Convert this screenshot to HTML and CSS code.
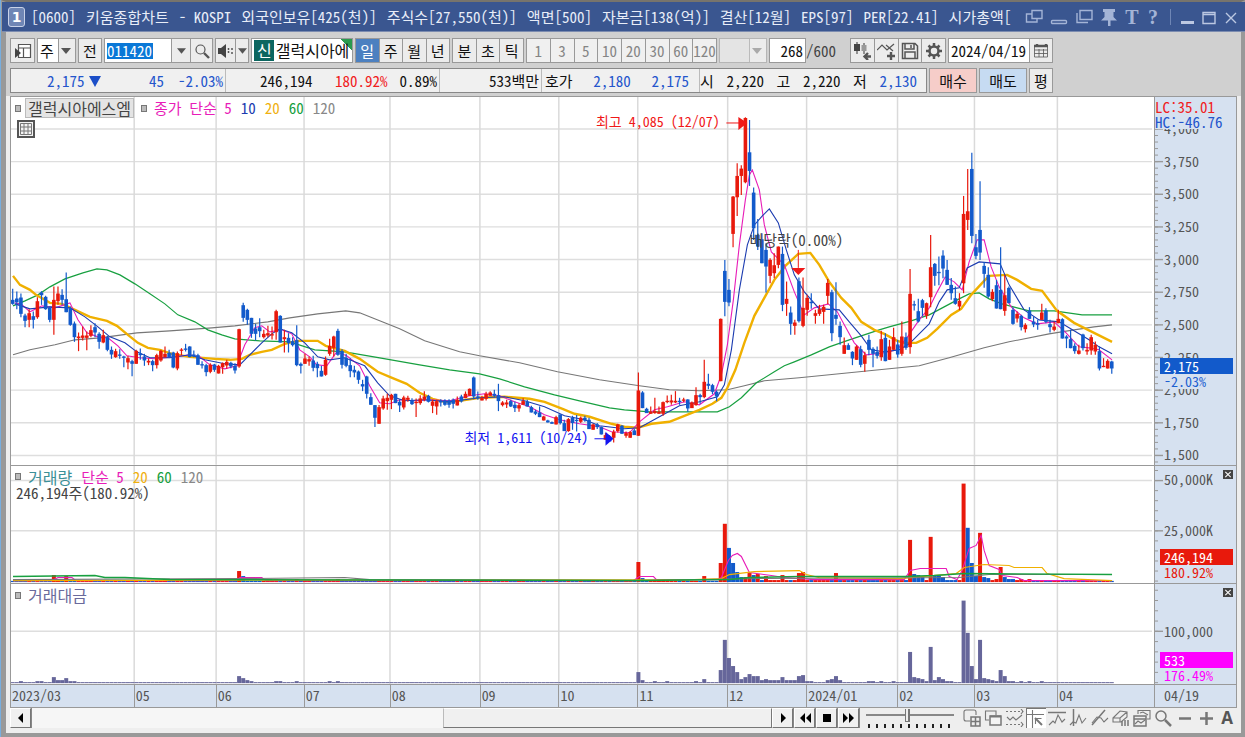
FILE: index.html
```html
<!DOCTYPE html>
<html lang="ko">
<head>
<meta charset="utf-8">
<title>[0600] 키움종합차트</title>
<link rel="stylesheet" href="styles.css">
</head>
<body>
<main class="window">
  <header class="titlebar">
    <span class="badge">1</span>
    <h1 class="title"><span>[0600]</span><span>키움종합차트</span><span>- KOSPI</span><span>외국인보유[425(천)]</span><span>주식수[27,550(천)]</span><span>액면[500]</span><span>자본금[138(억)]</span><span>결산[12월]</span><span>EPS[97]</span><span>PER[22.41]</span><span>시가총액[</span></h1>
    <div class="wintools">
      <button aria-label="창 분리"><svg viewBox="0 0 18 18"><path d="M7 2.500h10v8H7zM7 6H1.500v8H12v-3"/></svg></button>
      <button aria-label="접기"><svg viewBox="0 0 18 18"><rect x="1.500" y="12.500" width="15" height="3" rx="1"/></svg></button>
      <button aria-label="복제"><svg viewBox="0 0 18 18"><path d="M5 2.500h12v9H5zM2 5v9.500h11"/></svg></button>
      <button aria-label="고정"><svg viewBox="0 0 18 18"><path class="solid" d="M3 1h12v3h-1.500v5l3.500 3.500H1L4.500 9V4H3zM8 12h2.500v6H8z"/></svg></button>
      <button class="glyph">T</button>
      <button class="glyph" aria-label="도움말">?</button>
      <span class="split"></span>
      <button class="lit" aria-label="최소화"><svg viewBox="0 0 18 18"><path class="thick" d="M3 14.500h13"/></svg></button>
      <button class="lit" aria-label="최대화"><svg viewBox="0 0 18 18"><path d="M3 4.500h12v11H3zM3 6.500h12"/></svg></button>
      <button class="lit" aria-label="닫기"><svg viewBox="0 0 18 18"><path d="M4 5l10 10M14 5L4 15"/></svg></button>
    </div>
  </header>

  <div class="toolbar">
    <button class="btn" aria-label="패널"><svg class="ic" viewBox="0 0 18 18"><path d="M4.500 2.500h12v13h-12zM4.500 6h12M9.500 6v10" fill="#fff"/><path class="solid" d="M1 6l6 5-6 5z"/></svg></button>
    <span class="combo group"><select aria-label="종목 구분"><option>주</option></select><svg class="caret" viewBox="0 0 10 6"><path d="M0 0h10L5 6z"/></svg></span>
    <button class="btn mid">전</button>
    <span class="group">
      <input class="code" aria-label="종목코드" value="011420">
      <button class="seg" aria-label="최근 종목"><svg class="tri" viewBox="0 0 10 6"><path d="M0 0h10L5 6z"/></svg></button>
      <button class="seg find" aria-label="검색"><svg class="ic" viewBox="0 0 18 18"><circle cx="7.500" cy="7.500" r="4.500"/><path class="thick" d="M11 11l5 5"/></svg></button>
    </span>
    <span class="group">
      <button class="seg" aria-label="음성"><svg class="ic" viewBox="0 0 18 18"><path class="solid" d="M1 6h3l5-4v14l-5-4H1z"/><path d="M11.500 6v6M14 7h3M14 11h3" stroke-dasharray="2 1" stroke-width="1.500"/></svg></button>
      <button class="seg slim" aria-label="음성 설정"><svg class="tri" viewBox="0 0 10 6"><path d="M0 0h10L5 6z"/></svg></button>
    </span>
    <span class="group namebox"><b>신</b><span>갤럭시아에</span></span>
    <span class="group periods four"><button class="on">일</button><button>주</button><button>월</button><button>년</button></span>
    <span class="group periods three"><button>분</button><button>초</button><button>틱</button></span>
    <span class="group periods minutes"><button>1</button><button>3</button><button>5</button><button>10</button><button>20</button><button>30</button><button>60</button><button>120</button></span>
    <span class="combo group faded"><select aria-label="주기" disabled><option></option></select><svg class="caret" viewBox="0 0 10 6"><path d="M0 0h10L5 6z"/></svg></span>
    <label class="count"><input class="num" value="268" aria-label="봉 개수">/600</label>
    <span class="group icons">
      <button aria-label="봉 차트 추가"><svg class="ic" viewBox="0 0 18 18"><path d="M4 0v12M11 1v11"/><path class="solid" d="M1 2h6v7H1z"/><path fill="#999" stroke="none" d="M8.500 3h5v6h-5z"/><path class="thick" d="M12 14.500h6M15 11l-3.500 3.500L15 18"/></svg></button>
      <button aria-label="지표 추가"><svg class="ic" viewBox="0 0 18 18"><path d="M0 8l5-5 5 5 7-6M9 3l7 6"/><path class="thick" d="M10 14h8M14 10v8"/></svg></button>
      <button aria-label="저장"><svg class="ic" viewBox="0 0 18 18"><path d="M1.500 1.500H14L16.500 4v12.500h-15zM4 2v5h9V2M4 16v-6h10v6M10 3v3" stroke-width="1.500"/></svg></button>
      <button aria-label="설정"><svg class="ic" viewBox="0 0 18 18"><circle cx="9" cy="9" r="4.500" stroke-width="2.500"/><path d="M9 1v3M9 14v3M1 9h3M14 9h3M3.500 3.500l2 2M12.500 12.500l2 2M14.500 3.500l-2 2M5.500 12.500l-2 2" stroke-width="2.500"/></svg></button>
    </span>
    <span class="group"><input class="date" aria-label="기준일" value="2024/04/19"><button class="seg cal" aria-label="달력"><svg class="ic" viewBox="0 0 18 18"><path d="M2.500 4h13v11h-13zM2.500 8h13M2.500 11.500h13M7 7v8M11.500 7v8" stroke-width=".8"/><path class="thick" d="M2 4h14M5 2v2M14 2v2"/></svg></button></span>
  </div>

  <div class="quotes">
    <div class="quotebar">
      <div class="cell c1"><span class="down lead">2,175<svg class="fall" viewBox="0 0 12 11"><path d="M0 0h12L6 11z"/></svg></span><span class="down">45</span><span class="down">-2.03%</span></div>
      <div class="cell c2"><span class="lead">246,194</span><span class="up">180.92%</span><span>0.89%</span></div>
      <div class="cell c3"><span>533백만</span></div>
      <div class="cell c4"><span>호가</span><span class="down">2,180</span><span class="down">2,175</span></div>
      <div class="cell c5"><span>시</span><span>2,220</span><span>고</span><span>2,220</span><span>저</span><span class="down">2,130</span></div>
    </div>
    <button class="btn buy">매수</button>
    <button class="btn sell">매도</button>
    <button class="btn mid">평</button>
  </div>

  <section class="charts">
    <div class="panel price">
      <div class="plot">
        <svg id="price" viewBox="11 97 1144 368" preserveAspectRatio="none"></svg>
        <div class="legend">
          <i class="dot"></i><button class="name">갤럭시아에스엠</button><i class="dot"></i>
          <span class="m5 main">종가 단순 5</span><span class="m10">10</span><span class="m20">20</span><span class="m60">60</span><span class="m120">120</span>
        </div>
        <button class="gridbtn" aria-label="데이터 표"><svg viewBox="0 0 14 14"><path d="M1.500 1.500h11v11h-11zM1.500 5h11M1.500 9h11M5 2v10M9 2v10"/></svg></button>
        <span class="note high">최고 4,085 (12/07)</span>
        <span class="note low">최저 1,611 (10/24)</span>
        <span class="note ex">배당락(0.00%)</span>
      </div>
      <div class="axis" data-panel="price">
        <div class="extremes"><span class="up">LC:35.01</span><span class="down">HC:-46.76</span></div>
        <div class="mark now"><b>2,175</b><span>-2.03%</span></div>
      </div>
    </div>
    <div class="panel volume">
      <div class="plot">
        <svg id="volume" viewBox="11 466 1144 117" preserveAspectRatio="none"></svg>
        <div class="legend">
          <i class="dot"></i><span class="vol">거래량</span><span class="m5">단순 5</span><span class="m20">20</span><span class="m60">60</span><span class="m120">120</span>
        </div>
        <div class="sub">246,194주(180.92%)</div>
      </div>
      <div class="axis" data-panel="volume">
        <button class="close" aria-label="거래량 닫기"><svg viewBox="0 0 10 10"><path d="M2 2l6 6M8 2L2 8"/></svg></button>
        <div class="mark vnow"><b>246,194</b><span>180.92%</span></div>
      </div>
    </div>
    <div class="panel amount">
      <div class="plot">
        <svg id="amount" viewBox="11 584 1144 99" preserveAspectRatio="none"></svg>
        <div class="legend"><i class="dot"></i><span class="amt">거래대금</span></div>
      </div>
      <div class="axis" data-panel="amount">
        <button class="close" aria-label="거래대금 닫기"><svg viewBox="0 0 10 10"><path d="M2 2l6 6M8 2L2 8"/></svg></button>
        <div class="mark anow"><b>533</b><span>176.49%</span></div>
      </div>
    </div>
    <div class="timeline"><div id="months" class="months"></div><div class="today">04/19</div></div>
  </section>

  <footer class="bottom">
    <button class="scroll" aria-label="왼쪽"><svg viewBox="0 0 16 16"><path d="M10 3v10L5 8z"/></svg></button>
    <div class="track"><div class="thumb"></div></div>
    <button class="scroll" aria-label="오른쪽"><svg viewBox="0 0 16 16"><path d="M6 3v10l5-5z"/></svg></button>
    <button class="scroll" aria-label="뒤로"><svg viewBox="0 0 16 16"><path d="M8 3v10L3 8zM14 3v10L9 8z"/></svg></button>
    <button class="scroll" aria-label="정지"><svg viewBox="0 0 16 16"><path d="M4 4h8v8H4z"/></svg></button>
    <button class="scroll" aria-label="앞으로"><svg viewBox="0 0 16 16"><path d="M2 3v10l5-5zM8 3v10l5-5z"/></svg></button>
    <div class="speed"><input type="range" min="0" max="100" value="47" aria-label="속도"><div class="ticks"></div></div>
    <div class="tools">
      <button aria-label="추가"><svg viewBox="0 0 18 18"><path d="M7 12H3a2 2 0 0 1-2-2V3a2 2 0 0 1 2-2h8a2 2 0 0 1 2 2v3"/><path d="M8 8h9v9H8zM12.500 8v9M8 12.500h9" stroke-width="1.500"/></svg></button>
      <button aria-label="창 겹치기"><svg viewBox="0 0 18 18"><path d="M5 11H1.500v-9H12V6"/><path d="M6 7h11v9H6z" fill="#f4f4f4" stroke-width="1.500"/><path class="thick" d="M6 7.500h11"/></svg></button>
      <button aria-label="기간"><svg viewBox="0 0 18 18"><path d="M0 2.500h17M0 15.500h17" stroke-dasharray="2 2"/><path d="M1 8l3 3 3-3 3 3 6-5M15 0l2 2.500-2 2.500M15 13l2 2.500-2 2.500"/></svg></button>
      <button class="on" aria-label="십자선"><svg viewBox="0 0 18 18"><path d="M0 4.500h17M5.500 0v18"/><path class="thick" d="M8 8l7 7"/><path d="M8.500 14V8.500h6"/></svg></button>
      <button aria-label="수평선"><svg viewBox="0 0 18 18"><path d="M0 3.500h18" stroke-width="1.500"/><path d="M1 16l4-4 2 2 3-8 4 7 3-3"/></svg></button>
      <button aria-label="수직선"><svg viewBox="0 0 18 18"><path d="M4.500 0v17" stroke-width="1.500"/><path d="M1 16l3-3 3 1 3-8 3 8 4-5"/></svg></button>
      <button aria-label="추세선"><svg viewBox="0 0 18 18"><path d="M1 16L14 1" stroke-width="1.500"/><path d="M1 14l5-6 4 1 3 4 4-4"/></svg></button>
      <button aria-label="지우기"><svg viewBox="0 0 18 18"><path d="M1 9l7-7 7 1v5l-6 5H1zM1 9h7l7-6M8 9v4"/><path d="M10 12v5M13 11v6M16 11v6" stroke-width="1.500"/></svg></button>
      <button aria-label="차트 복사"><svg viewBox="0 0 18 18"><path d="M5 5V1.500h12V10h-3"/><path d="M1 7h12v10H1zM1 10h12" stroke-width="1.500"/><path d="M2 15l3-3 3 2 4-3M7 4l3-1 5 3"/></svg></button>
      <button aria-label="확대경"><svg viewBox="0 0 18 18"><circle cx="7" cy="7" r="5" stroke-width="1.500"/><path d="M11 11l6 6" stroke-width="2.500"/></svg></button>
      <button aria-label="축소"><svg viewBox="0 0 18 18"><path d="M3 9.500h12" stroke-width="2.500"/></svg></button>
      <button aria-label="확대"><svg viewBox="0 0 18 18"><path d="M3 9.500h13M9.500 3v13" stroke-width="2.500"/></svg></button>
      <button class="letter">A</button>
    </div>
  </footer>
</main>
<script src="chart.js"></script>
</body>
</html>
```
FILE: styles.css
```css
* { box-sizing: border-box; }
body {
  margin: 0;
  font: 15px/20px "Noto Sans Mono CJK KR", "Liberation Sans", "Noto Sans CJK KR", sans-serif;
  color: #111;
  background: #78aede;
}
button, input, select { font: inherit; color: inherit; margin: 0; padding: 0; border: 0; border-radius: 0; background: none; }
svg { display: block; }

.window {
  display: flex;
  flex-direction: column;
  height: 100vh;
  margin-left: 1px;
  background: #d0d0d0;
  border: solid #999;
  border-width: 2px 4px 4px 5px;
  border-top-color: #77746c;
}

/* title bar */
.titlebar {
  display: flex;
  align-items: center;
  gap: 6px;
  height: 30px;
  margin: 0 -4px;
  padding: 0 4px 0 6px;
  background: #3a5690;
  border-bottom: 1px solid #7c8cb0;
  color: #e8edf8;
  flex: none;
}
.badge {
  width: 17px;
  height: 20px;
  border: 1px solid #c8d2e8;
  border-radius: 3px;
  background: #6f86b5;
  color: #fff;
  text-align: center;
  font: bold 14px/18px "DejaVu Sans", sans-serif;
  flex: none;
}
.title { display: flex; gap: 10px; flex: 1 1 0; min-width: 0; margin: 0; font-size: 15px; font-weight: normal; line-height: 24px; white-space: nowrap; overflow: hidden; }
.wintools { display: flex; align-items: center; gap: 5px; flex: none; }
.wintools button { width: 20px; height: 20px; color: #a4b4d6; }
.wintools svg { width: 18px; height: 18px; margin: auto; fill: none; stroke: #a4b4d6; stroke-width: 1.4; }
.wintools .solid { fill: #a4b4d6; stroke: none; }
.wintools .thick { stroke-width: 3; }
.wintools .lit { margin-left: -3px; }
.wintools .lit svg { stroke: #bcc8e2; }
.wintools .glyph { width: 16px; font: bold 20px/20px "Liberation Serif", serif; }
.split { width: 1px; height: 16px; margin: 0 4px; background: #6f86b5; }

/* toolbar */
.toolbar { display: flex; align-items: center; gap: 2px; height: 36px; padding: 6px 4px 5px; flex: none; }
.btn, .group { height: 25px; border: 1px solid #999; background: #ececec; flex: none; }
.group { display: flex; align-items: stretch; }
.btn { width: 25px; }
.btn.mid { width: 24px; }
.ic { width: 18px; height: 18px; margin: auto; fill: none; stroke: #555; stroke-width: 1.2; }
.ic .solid { fill: #444; stroke: none; }
.ic .thick { stroke-width: 2.4; }
.combo { position: relative; width: 39px; background: linear-gradient(90deg, #fff 20px, #999 20px, #999 21px, #ececec 21px); }
.combo select { width: 100%; appearance: none; padding-left: 2px; }
.combo .caret { position: absolute; right: 4px; top: 9px; width: 10px; height: 6px; fill: #555; pointer-events: none; }
.faded { width: 48px; background: linear-gradient(90deg, #e4e4e4 29px, #bbb 29px, #bbb 30px, #ececec 30px); border-color: #b5b5b5; }
.faded .caret { fill: #aaa; }
.code { width: 66px; padding-left: 2px; color: #fff; background: linear-gradient(#0a78d7, #0a78d7) 2px 4px / 46px 16px no-repeat #fff; }
.seg { width: 19px; border-left: 1px solid #999; }
.group > .seg:first-child { border-left: 0; }
.find { width: 22px; }
.slim { width: 13px; }
.tri { width: 9px; height: 6px; margin: auto; fill: #555; }
.namebox { width: 102px; background: linear-gradient(225deg, #2a9a4e 8px, transparent 8px), #fff; padding: 1px 0 1px 2px; overflow: hidden; white-space: nowrap; font-size: 16px; }
.namebox b { background: #0c6660; color: #fff; font-weight: normal; padding: 0 2px 0 3px; margin-right: 2px; }
.periods button { flex: 1 1 0; border-left: 1px solid #999; }
.periods button:first-child { border-left: 0; }
.four { width: 95px; }
.three { width: 72px; }
.minutes { width: 191px; color: #858585; background: #f0f0f0; }
.periods .on { background: #4c80c0; color: #fff; }
.count { display: flex; align-items: center; width: 79px; color: #444; flex: none; }
.num { width: 37px; height: 25px; border: 1px solid #999; background: #fff; text-align: right; padding-right: 2px; color: #111; }
.icons { width: 96px; }
.icons button { flex: 1 1 0; border-left: 1px solid #999; }
.icons button:first-child { border-left: 0; }
.date { width: 80px; padding-left: 2px; background: #fff; }
.cal { width: 23px; }

/* quote strip */
.quotes { display: flex; gap: 2px; height: 25px; padding: 0 4px; flex: none; }
.quotebar { display: flex; width: 917px; background: #f0f0f0; border: 1px solid #888; line-height: 23px; flex: none; }
.cell { display: flex; justify-content: space-between; border-left: 1px solid #bbb; white-space: nowrap; }
.cell:first-child { border-left: 0; }
.lead { margin-right: auto; }
.c1 { width: 214px; padding: 0 2px 0 36px; gap: 14px; }
.c2 { width: 214px; padding: 0 2px 0 34px; gap: 12px; }
.c3 { width: 102px; padding: 0 2px; justify-content: flex-end; }
.c4 { width: 158px; padding: 0 10px 0 3px; }
.c5 { flex: 1; padding: 0 9px 0 0; }
.fall { display: inline-block; width: 12px; height: 11px; margin-left: 4px; fill: #1c4fc8; }
.down { color: #2455cc; }
.up { color: #f0201c; }
.buy, .sell { width: 48px; }
.buy { background: #f6cdc9; }
.sell { background: #c6dbf2; }

/* charts */
.charts { display: flex; flex-direction: column; flex: 1; min-height: 0; margin-top: 3px; padding: 0 4px; background: #eee; }
.panel { display: grid; grid-template-columns: minmax(0, 1fr) 82px; min-height: 0; background: #fff; border: solid #999; border-width: 1px 1px 0; }
.price { flex: 369 1 0; }
.volume { flex: 118 1 0; }
.amount { flex: 100 1 0; }
.plot { position: relative; min-height: 0; overflow: hidden; }
.plot > svg { position: absolute; width: 100%; height: 100%; }
.axis { position: relative; background: #d6e1f0; border-left: 1px solid #999; overflow: hidden; color: #555; font-size: 14px; }
.axis > svg { position: absolute; left: 0; top: 0; width: 8px; height: 100%; }
.lab { position: absolute; left: 9px; line-height: 16px; margin-top: -9px; }
.legend { position: absolute; left: 4px; top: 0; display: flex; align-items: center; gap: 9px; white-space: nowrap; line-height: 22px; }
.legend .dot { width: 6px; height: 7px; border: 1px solid #777; background: #bbb; margin-right: -2px; }
.legend .dot + .name { margin-left: -3px; margin-right: -2px; }
.name { height: 20px; padding: 0 2px; background: #e4e4e4; border: 1px solid #bbb; color: #444; line-height: 18px; }
.name, .vol, .amt { font-size: 16px; }
.m5 { color: #e81cb8; }
.m10 { color: #1c3cb0; }
.m20 { color: #f0b010; }
.m60 { color: #18a040; }
.m120 { color: #888; }
.vol { color: #3c9098; }
.amt { color: #6a6a9c; }
.sub { position: absolute; left: 5px; top: 17px; color: #444; }
.gridbtn { position: absolute; left: 6px; top: 23px; width: 18px; height: 18px; border: 2px solid #555; background: #f4f4f4; }
.gridbtn svg { width: 14px; height: 14px; fill: none; stroke: #777; }
.note { position: absolute; font-size: 14px; line-height: 18px; white-space: nowrap; }
.high { color: #f01818; right: 38%; top: 4%; }
.low { color: #1414f0; right: 49.500%; top: 90%; }
.ex { color: #444; left: 64.600%; top: 36.500%; font-size: 15px; }
.extremes { position: absolute; left: 0; top: 2px; line-height: 15px; font-size: 15px; background: #d6e1f0; }
.extremes span { display: block; }
.mark { position: absolute; left: 5px; right: 3px; line-height: 15px; }
.mark b, .mark span { display: block; padding-left: 4px; font-weight: normal; }
.mark b { color: #fff; line-height: 16px; }
.mark span { background: #d6e1f0; }
.now { top: 71%; color: #1c60d0; }
.now b { background: #125acb; }
.vnow { top: 71%; color: #e8190c; }
.vnow b { background: #e8190c; }
.anow { top: 68%; color: #f0f; }
.anow b { background: #f0f; }
.close { position: absolute; right: 3px; top: 4px; width: 10px; height: 9px; background: #444; }
.close svg { width: 10px; height: 9px; stroke: #fff; stroke-width: 1.2; }
.timeline { display: grid; grid-template-columns: minmax(0, 1fr) 82px; height: 24px; flex: none; background: #d6e1f0; border: 1px solid #999; color: #555; font-size: 14px; }
.months { position: relative; }
.months span { position: absolute; top: 0; bottom: 0; padding-left: 1px; border-left: 1px solid #999; }
.months span:first-child { border-left: 0; }
.today { border-left: 1px solid #999; padding-left: 9px; }

/* scroll bar and drawing tools */
.bottom { display: flex; height: 25px; padding: 0 4px 4px; background: #eee; flex: none; }
.scroll { width: 21px; height: 20px; background: #f0f0f0; border: 1px solid; border-color: #fff #777 #777 #fff; box-shadow: 1px 0 #888; margin-right: 1px; flex: none; }
.scroll svg { width: 16px; height: 16px; margin: auto; }
.track { flex: 1 1 0; min-width: 60px; height: 20px; background: #f6f6f6; }
.thumb { width: 44.500%; height: 20px; margin-left: auto; background: #f0f0f0; border: 1px solid; border-color: #fff #777 #777 #bbb; }
.speed { width: 88px; margin: 0 8px 0 6px; flex: none; }
.speed input { display: block; width: 88px; height: 14px; appearance: none; background: linear-gradient(#888, #888) 0 6px / 100% 2px no-repeat; }
.speed input::-webkit-slider-thumb { appearance: none; width: 5px; height: 13px; background: #eee; border: solid #777; border-width: 0 2px 1px 1px; }
.ticks { height: 4px; margin: 2px 2px 0; background: repeating-linear-gradient(90deg, #222 0 2px, transparent 2px 8px); }
.tools { display: flex; justify-content: space-between; width: 275px; flex: none; }
.tools button { width: 20px; height: 20px; }
.tools .on { background: #fff; border-left: 1px solid #777; border-top: 1px solid #777; }
.tools svg { width: 18px; height: 18px; margin: auto; fill: none; stroke: #777; stroke-width: 1.1; }
.tools .thick { stroke-width: 2; }
.tools .letter { font: bold 17px/20px "Open Sans", sans-serif; color: #555; }
```
FILE: chart.js
```javascript
const RED = '#e8190c', BLUE = '#125acb', STEP = 4.12, FIRST = 12.7;
const px = i => FIRST + i * STEP;

// Candles: direction (R up, B down), high, body top, body bottom, low; in thirds of a unit below `top`.
const runs = [
  { at: 0, top: 250, rows: `B117,150,162,165 B125,146,157,178 B131,143,192,202 B192,197,213,232 R178,190,210,232 B185,199,210,236 R142,154,202,207 B124,128,136,165 B138,141,178,180 B170,174,210,217 R110,150,210,255 R110,131,154,165 B118,135,150,165 B68,148,187,187 B170,175,225,228 B215,221,262,276 R248,260,265,304 R230,257,264,272 R245,257,264,301 R226,241,258,262 B220,232,248,262 B247,252,276,297 R240,256,278,280 B258,262,300,304 B290,300,314,327 R297,304,322,324 B298,314,318,327 B318,320,324,352 R318,325,338,358 B330,334,342,379 R300,303,342,342 B296,311,316,330 B312,320,332,348 R326,333,338,346 B330,334,346,364 R312,316,346,356 R300,303,332,336 R290,312,322,324 B300,309,322,324 B306,308,353,355 R305,310,356,361 R295,299,303,316 B282,296,300,305 B289,290,322,322 B302,314,320,322 B312,316,345,345 B334,343,347,356 B342,346,367,379 R340,345,366,370 B342,344,360,366 R345,348,371,371 R338,340,352,372 R330,336,347,357 B336,339,350,355 B340,348,362,371 R237,238,350,354 B159,166,204,216 B177,180,210,225 B204,204,252,264 B222,236,252,272 B205,232,244,262 R240,252,262,266 R228,250,257,262 R230,253,257,269 R180,184,247,270 B196,198,278,278 R240,262,268,308 B250,264,280,308 B262,274,286,290 B226,271,346,349 B338,342,348,371 R312,326,342,342 R320,328,335,348 B318,332,354,364 B336,342,355,382` },
  { at: 75, top: 290, rows: `B228,243,260,260 R200,210,255,258 R147,168,192,198 R138,140,174,200 B117,123,195,198 B178,184,225,236 B192,204,228,232 B205,226,244,262 B228,240,248,262 B242,245,270,282 B270,283,290,304 B258,260,312,326 B310,322,345,345 B346,346,384,412 R346,352,402,402 R318,326,356,360 R312,324,334,360 R312,315,330,358 B312,312,340,340 B328,336,347,367 R318,323,353,359 R318,324,330,336 B325,332,343,346 R326,336,340,382 R316,326,340,345 R304,320,330,334 B315,318,336,338 R330,335,348,370 R330,334,350,375 B328,333,338,350 B328,332,345,348 B328,332,345,354 B326,330,342,356 R320,330,347,347 B315,320,335,338 R305,312,325,325 R296,297,318,318 B260,263,320,328 B305,320,325,330 R318,325,332,332 R306,312,327,332 R304,308,318,318 B300,312,318,322 B282,316,334,364 R334,338,346,350 R330,338,344,355 B330,334,350,352 B335,345,355,367 R340,346,356,366 R325,334,345,345 B330,336,350,350 B348,352,368,368 B360,365,372,376 B350,368,382,382 R378,380,392,392 B390,392,398,398 B395,397,402,402 R378,382,404,404 B374,374,400,404 B390,400,424,424 R385,388,424,426 B378,384,400,420 B376,390,394,425 R380,384,396,400 B378,384,392,396 B384,390,418,418 R402,404,420,420 B400,404,412,418 B410,412,434,434 R430,436,450,450 B436,440,455,455 R420,426,444,458 R402,404,424,428 B406,408,432,432 R425,430,438,444 R424,427,444,444 B418,422,436,436` },
  { at: 152, top: 100, rows: `R818,872,1008,1008 B874,878,925,925 B924,927,940,940 R920,936,942,942 R894,934,940,942 R920,936,942,942 R905,907,942,948 R887,903,907,910 R885,902,908,915 R874,903,908,910 B894,903,907,915 R894,899,903,907 B898,899,926,936 R905,908,925,925 R862,886,916,918 B882,886,892,912 R780,846,892,895 B822,852,858,868 B852,856,876,883 B872,876,890,904 R656,657,844,844 B480,513,606,649 B537,570,608,619 R288,290,402,442 R190,228,292,348 R196,206,228,285 R52,54,247,250 B60,157,213,258 B263,278,385,420 B357,405,440,450 B400,418,490,490 B430,450,500,578 R475,480,528,550 R460,496,520,535 R440,440,495,505 B440,462,615,634 R545,597,612,648 B620,638,672,705 R660,668,678,705 B533,544,664,668 R533,624,678,682 R585,594,630,648 B580,606,610,627 R630,640,648,672 R615,628,642,648 R615,621,636,672 R537,549,588,613 B570,577,700,724 B547,645,657,675 B665,678,712,735 R713,736,762,762 B730,736,750,750 B754,756,776,796 R736,740,780,780 B738,748,795,802 R756,766,792,816 B705,720,750,766 B742,747,762,802 B740,756,768,776 R693,718,772,783 B700,714,784,784 R720,740,780,780 R684,712,750,750 B720,734,764,774 R665,710,762,768 B698,712,744,750` },
  { at: 218, top: 130, rows: `R417,492,652,672 B513,523,527,542 B507,544,575,578 B507,511,534,560 R518,520,558,567 R315,412,502,532 B399,402,438,468 B380,426,430,466 B361,377,416,445 B390,420,465,465 B444,465,490,510 B470,505,522,525 R490,513,530,541 R198,252,460,490 R117,244,270,300 B68,117,318,340 B312,352,378,388 B154,300,368,390 B396,408,432,474 B412,435,500,504 R478,486,508,514 B450,466,536,536 B352,480,538,538 R435,496,543,558 B470,474,520,520 B532,540,582,585 R545,552,566,578 B555,558,592,602 R580,585,598,608 B532,542,567,567 B560,575,584,592 B570,580,585,600 R522,548,570,570 B535,542,576,580 B570,583,592,608 R575,590,600,604 R540,567,580,580 B565,568,626,626 B616,620,626,655 B600,628,655,655 B640,648,664,672 R645,662,672,674 B612,614,655,662 R640,660,665,675 R615,622,662,675 R635,645,665,675 B650,664,716,722 R685,708,712,712 R688,693,716,716 B693,695,716,732` }
];

const candles = [];
for (const run of runs) {
  run.rows.split(' ').forEach((row, k) => {
    const [h, t, b, l] = row.slice(1).split(',').map(v => run.top + v / 3);
    candles[run.at + k] = { color: row[0] === 'R' ? RED : BLUE, h, t, b, l };
  });
}

const averages = {
  m120: ['#777', 1.1, '13,355 30,350 55,345 75,340 100,338 137,333 170,331 212,328 235,326 268,322 290,318 318,314 346,311 360,313 380,321 400,329 425,341 460,352 480,356 520,363 558,372 600,380 640,386 670,390 700,391 728,390 745,386 765,381 800,378 840,374 880,370 920,366 950,358 985,348 1010,342 1050,334 1075,330 1095,327 1113,325'],
  m60: ['#18a040', 1.2, '13,306 25,301 38,295 50,287 65,279 83,273 97,269 107,270 120,275 135,284 150,294 165,304 178,315 195,322 208,330 222,335 235,339 260,341 290,342 315,350 345,352 380,358 420,365 450,370 480,374 500,379 525,387 555,395 580,401 610,408 625,410 650,412 718,412 730,407 742,398 757,383 775,372 785,366 795,362 812,355 830,347 850,340 880,330 890,327 912,321 930,315 945,307 960,299 970,294 980,293 990,299 1003,304 1018,308 1030,311 1055,311 1083,315 1113,315'],
  m20: ['#f0b000', 2.4, '13,276 20,285 30,290 36,295 50,303 62,304 75,310 90,317 107,321 117,326 128,335 138,343 148,348 160,350 172,354 190,357 215,359 230,360 242,359 250,355 262,352 272,350 285,344 297,341 318,341 326,346 345,351 360,359 378,372 390,377 407,384 420,393 433,399 445,402 460,401 480,398 505,397 530,399 545,402 563,409 575,414 590,417 612,424 625,427 638,428 652,424 670,422 685,416 700,410 713,404 722,398 728,388 736,370 745,343 755,316 765,298 775,280 786,266 799,254 811,253 820,265 830,282 842,298 852,308 862,322 875,330 885,334 898,341 905,343 917,343 928,338 938,329 952,315 962,309 972,295 985,281 990,276 1008,275 1018,280 1032,289 1043,291 1058,311 1075,323 1095,333 1113,342'],
  m5: ['#e81cb8', 1.1, '15,303 22,305 30,312 42,306 55,308 70,303 78,320 87,333 98,337 108,338 118,346 127,356 140,358 155,359 175,357 190,355 200,357 210,365 225,369 237,366 245,345 255,328 262,326 270,332 282,330 292,334 300,350 310,357 317,365 327,366 337,352 347,356 360,366 370,386 380,403 390,404 400,400 415,401 430,400 450,401 470,396 485,394 500,396 515,402 530,407 545,415 560,420 580,424 600,427 612,432 630,433 640,422 655,410 668,407 685,402 700,405 715,394 722,375 728,345 734,300 740,245 746,200 750,175 753,170 760,190 765,225 772,252 785,265 795,292 805,315 815,308 829,304 838,312 845,325 855,343 867,355 885,353 898,350 909,336 920,320 930,308 938,292 946,277 955,282 963,290 970,262 978,240 985,240 992,267 1000,287 1012,307 1025,318 1038,324 1055,322 1067,333 1080,347 1090,348 1100,350 1113,360'],
  m10: ['#1c3cb0', 1.1, '15,304 30,309 50,307 70,308 85,317 98,327 110,337 125,343 137,352 150,358 170,358 190,355 205,360 225,364 240,365 250,355 262,343 272,334 280,329 292,333 305,343 318,357 330,360 345,358 365,366 378,383 390,396 405,401 425,400 450,402 480,398 505,397 525,401 545,407 565,416 585,420 600,426 625,429 640,428 660,417 680,406 700,402 718,397 725,385 732,350 740,290 748,245 755,225 763,216 770,209 779,223 787,250 795,275 805,292 820,309 840,310 850,322 862,336 872,350 885,352 900,350 910,344 920,334 930,324 940,302 948,290 960,288 968,268 980,262 1001,264 1010,285 1025,310 1040,320 1060,322 1075,331 1090,340 1100,347 1113,354']
};

const volumeAverages = [
  ['#e81cb8', 1.1, '13,580 52,580 58,577 72,577 76,580 236,580 240,577 262,577 266,580 634,580 640,576 654,576 657,579 718,579 722,577 729,560 733,555 738,553 742,556 750,572 772,575 785,577 815,579 905,579 911,570 921,568 947,568 950,576 958,579 963,570 970,548 977,545 982,535 985,550 990,565 1000,569 1003,575 1018,577 1025,580 1113,580'],
  ['#f0b000', 1.2, '13,580 695,579 722,578 730,574 755,571 800,570 807,574 820,577 900,578 957,573 965,567 985,564 1010,565 1015,567 1043,567 1048,573 1065,578 1113,580'],
  ['#777', 1.1, '13,579 240,578 345,577 370,579 640,580 760,578 960,577 990,574 1113,574'],
  ['#18a040', 1.4, '13,576 95,575 105,577 125,577 170,579 640,580 730,579 750,577 800,576 905,576 935,575 965,573 1113,574']
];

const volumes = { 10: 'R7', 13: 'R6', 55: 'R11', 56: 'B6', 64: 'R3', 69: 'R3', 79: 'R3', 152: 'R20', 153: 'B4', 168: 'R6', 172: 'R19', 173: 'R58', 174: 'B34', 175: 'B19', 176: 'B10', 177: 'B5', 178: 'R5', 179: 'R9', 180: 'B7', 181: 'R8', 183: 'R6', 187: 'R7', 191: 'R9', 192: 'R10', 200: 'R9', 218: 'R42', 219: 'B8', 220: 'B7', 221: 'B5', 223: 'R45', 224: 'B7', 225: 'B7', 226: 'B5', 231: 'R98', 232: 'B54', 233: 'B19', 234: 'B6', 235: 'R49', 236: 'B5', 237: 'B4', 239: 'R3', 240: 'R15', 241: 'B5', 242: 'B3', 243: 'B3', 245: 'R3', 247: 'R3' };
const amounts = { 2: 2, 6: 2, 7: 2, 10: 6, 11: 3, 12: 3, 13: 5, 14: 2, 15: 2, 55: 7, 56: 5, 57: 3, 58: 2, 64: 2, 65: 2, 69: 2, 77: 2, 79: 2, 152: 11, 153: 3, 156: 2, 159: 2, 166: 2, 168: 4, 172: 13, 173: 43, 174: 25, 175: 17, 176: 11, 177: 4, 178: 6, 179: 9, 180: 7, 181: 7, 182: 3, 183: 4, 184: 3, 185: 3, 186: 3, 187: 6, 188: 3, 189: 3, 190: 3, 191: 7, 192: 8, 193: 2, 194: 2, 198: 3, 199: 4, 200: 7, 201: 3, 208: 2, 209: 2, 211: 2, 214: 2, 218: 31, 219: 6, 220: 5, 221: 4, 222: 2, 223: 36, 224: 3, 225: 6, 226: 4, 227: 2, 228: 2, 231: 82, 232: 50, 233: 17, 234: 4, 235: 43, 236: 5, 237: 4, 238: 3, 239: 2, 240: 13, 241: 7, 242: 2, 243: 2, 245: 2, 247: 2, 250: 2 };

const months = [[11, '2023/03'], [134, '05'], [216, '06'], [304, '07'], [390, '08'], [480, '09'], [559, '10'], [638, '11'], [728, '12'], [807, '2024/01'], [898, '02'], [975, '03'], [1058, '04']];
const priceLabels = ['4,000', '3,750', '3,500', '3,250', '3,000', '2,750', '2,500', '2,250', '2,000', '1,750', '1,500'].map((t, i) => [129 + i * 32.67, t]);

const line = (x1, y1, x2, y2, c, w) => `<path d="M${x1} ${y1}L${x2} ${y2}" stroke="${c}" stroke-width="${w}"/>`;
const box = (x, y, w, h, c) => `<rect x="${x}" y="${y}" width="${w}" height="${h}" fill="${c}"/>`;
const curve = ([c, w, points]) => `<polyline points="${points}" fill="none" stroke="${c}" stroke-width="${w}"/>`;
const grid = (ys, top, bottom) =>
  ys.map(y => line(11, y, 1153, y, '#dedede', 1.4)).join('') +
  months.slice(1).map(([x]) => line(x + .3, top, x + .3, bottom, '#dadada', 1.5)).join('');

const candleSvg = candles.map((c, i) =>
  line(px(i), c.h, px(i), c.l, c.color, 1.2) + box(px(i) - 1.8, c.t, 3.6, Math.max(1.2, c.b - c.t), c.color)).join('');
const arrows =
  '<path d="M727 123h13" stroke="#f01818"/><path d="M739 117v13l9-7z" fill="#f01818"/>' +
  '<path d="M595 439h12" stroke="#1414f0"/><path d="M606 432v14l8-7z" fill="#1414f0"/>' +
  '<path d="M799 250v18" stroke="#f01818"/><path d="M792 268h14l-7 7z" fill="#f01818"/>';

price.innerHTML = grid(priceLabels.map(p => p[0]), 97, 465) +
  curve(averages.m120) + curve(averages.m60) + curve(averages.m20) + curve(averages.m5) + curve(averages.m10) + candleSvg + arrows;

volume.innerHTML = grid([480.5, 530.5], 466, 583) + candles.map((c, i) => {
  const v = volumes[i] || (c.color === RED ? 'R' : 'B') + (i > 178 && i < 250 ? 2 : 1.2);
  const h = +v.slice(1);
  return box(px(i) - 2, 581.5 - h, 4, h, v[0] === 'R' ? RED : BLUE);
}).join('') + volumeAverages.map(curve).join('');

amount.innerHTML = grid([631], 584, 683) + candles.map((c, i) => {
  const h = amounts[i] || 1;
  return box(px(i) - 2, 682.5 - h, 4, h, '#66669a');
}).join('');

const axes = {
  price: { top: 97, height: 368, labels: priceLabels, minor: 6.534, start: 129 },
  volume: { top: 466, height: 117, labels: [[480.5, '50,000K'], [530.5, '25,000K']], minor: 10, start: 480.5 },
  amount: { top: 584, height: 99, labels: [[631, '100,000']], minor: 10.2, start: 631 }
};
document.querySelectorAll('.axis').forEach(el => {
  const a = axes[el.dataset.panel];
  let marks = '';
  for (let y = a.start - 4 * a.minor; y < a.top + a.height; y += a.minor) {
    if (y > a.top) marks += line(0, y, 3, y, '#999', 1);
  }
  marks += a.labels.map(([y]) => line(0, y, 8, y, '#999', 1.4)).join('');
  const labels = a.labels.map(([y, t]) => `<span class="lab" style="top:${((y - a.top) / a.height * 100).toFixed(2)}%">${t}</span>`).join('');
  el.insertAdjacentHTML('afterbegin', `<svg viewBox="0 ${a.top} 8 ${a.height}" preserveAspectRatio="none">${marks}</svg>${labels}`);
});

document.getElementById('months').innerHTML = months.map(([x, t]) => `<span style="left:${((x - 11) / 1144 * 100).toFixed(2)}%">${t}</span>`).join('');
```
